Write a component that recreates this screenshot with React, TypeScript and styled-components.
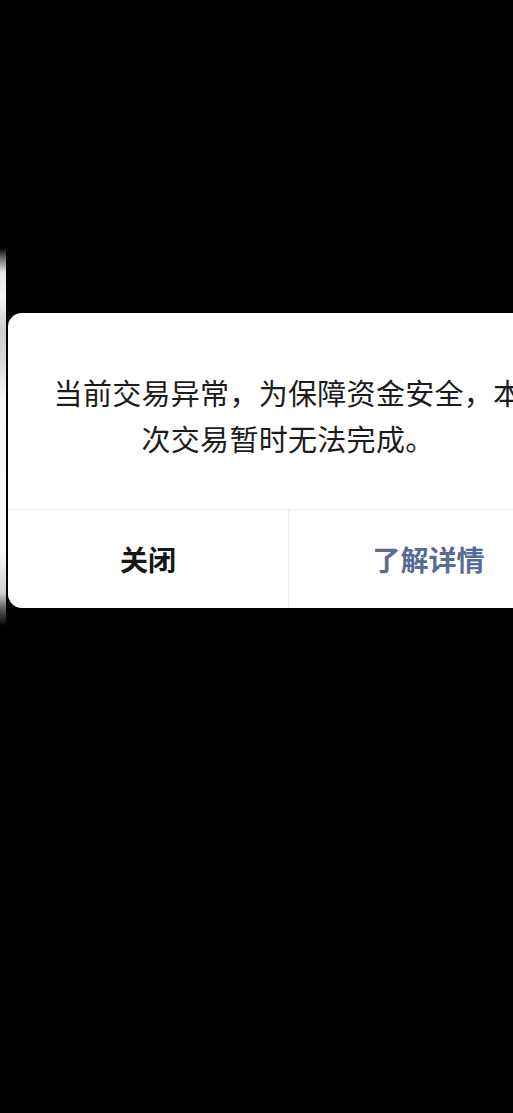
import styled, { createGlobalStyle } from 'styled-components';

const GlobalStyle = createGlobalStyle`
  html, body {
    margin: 0;
    padding: 0;
    background: #000;
    overflow: hidden;
  }
  body {
    font-family: "Noto Sans CJK SC", "Noto Sans", sans-serif;
  }
`;

const Screen = styled.div`
  width: 513px;
  height: 1113px;
  background: #000;
  overflow: hidden;
  display: flex;
  align-items: flex-start;
`;

const EdgeGlow = styled.div`
  flex: 0 0 6px;
  margin-top: 248px;
  height: 380px;
  background: linear-gradient(
    to bottom,
    #000 0px,
    #6a6a6a 10px,
    #e6e6e6 24px,
    #f4f4f4 50px,
    #cfcfcf 80px,
    #d8d8d8 110px,
    #f6f6f6 150px,
    #fbfbfb 300px,
    #d0d0d0 345px,
    #555 362px,
    #000 378px
  );
`;

const Dialog = styled.div`
  flex: 0 0 560px;
  margin-left: 2px;
  margin-top: 313px;
  background: #fff;
  border-radius: 14px;
  display: flex;
  flex-direction: column;
  overflow: hidden;
`;

const Message = styled.p`
  margin: 0;
  height: 196px;
  box-sizing: border-box;
  padding: 56px 40px 0;
  font-size: 29px;
  line-height: 46px;
  color: #1c1c1c;
  text-align: center;
  letter-spacing: 0.3px;
`;

const Actions = styled.div`
  display: grid;
  grid-template-columns: 1fr 1fr;
  height: 98px;
  border-top: 1px solid #ececec;
`;

const ActionButton = styled.button<{ $primary?: boolean }>`
  border: none;
  background: transparent;
  font-family: inherit;
  font-size: 28px;
  font-weight: 700;
  color: ${p => (p.$primary ? '#576b95' : '#161616')};
  border-left: ${p => (p.$primary ? '1px solid #ececec' : 'none')};
  padding: 0 0 ${p => (p.$primary ? '0' : '0')};
  cursor: pointer;
`;

export default function App() {
  return (
    <>
      <GlobalStyle />
      <Screen>
        <EdgeGlow />
        <Dialog>
          <Message>
            当前交易异常，为保障资金安全，本
            <br />
            次交易暂时无法完成。
          </Message>
          <Actions>
            <ActionButton>关闭</ActionButton>
            <ActionButton $primary>了解详情</ActionButton>
          </Actions>
        </Dialog>
      </Screen>
    </>
  );
}
